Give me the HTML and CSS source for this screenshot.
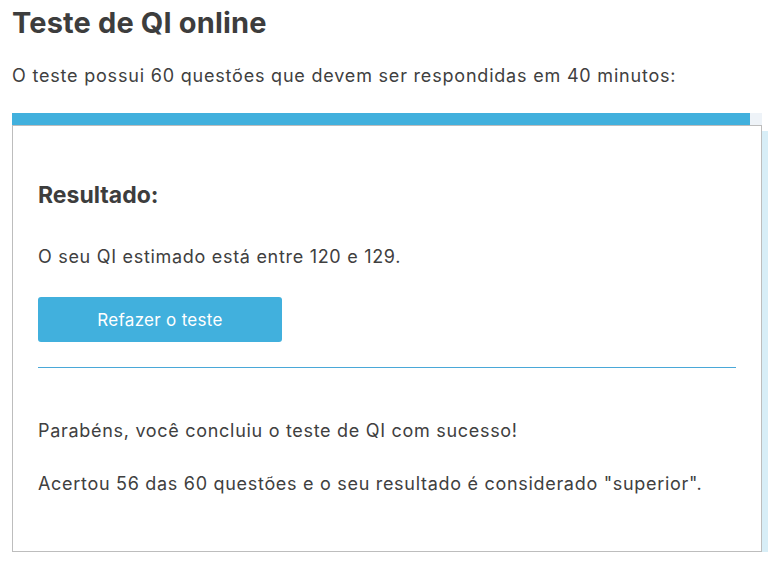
FILE: index.html
```html
<!DOCTYPE html>
<html lang="pt">
<head>
<meta charset="utf-8">
<link rel="stylesheet" href="styles.css">
</head>
<body>
<main class="page">
  <h1 class="title">Teste de QI online</h1>
  <p class="intro">O teste possui 60 questões que devem ser respondidas em 40 minutos:</p>
  <div class="progress"><div class="progress-fill"></div></div>
  <section class="card">
    <h2 class="card-title">Resultado:</h2>
    <p class="text">O seu QI estimado está entre 120 e 129.</p>
    <button class="btn" type="button">Refazer o teste</button>
    <hr class="divider">
    <p class="text">Parabéns, você concluiu o teste de QI com sucesso!</p>
    <p class="text">Acertou 56 das 60 questões e o seu resultado é considerado "superior".</p>
  </section>
</main>
</body>
</html>
```
FILE: styles.css
```css
* { box-sizing: border-box; }
html, body { margin: 0; padding: 0; background: #fff; }
body {
  font-family: "Inter", "Noto Sans", sans-serif;
  color: #404040;
}
.page {
  padding: 5px 20px 0 12px;
}
.title {
  margin: 0;
  font-size: 29px;
  line-height: 36px;
  font-weight: 700;
  color: #3d3d3d;
  letter-spacing: 0.15px;
}
.intro {
  margin: 23px 0 0;
  font-size: 18px;
  line-height: 24px;
  letter-spacing: 0.8px;
}
.progress {
  margin-top: 25px;
  height: 12px;
  width: 750px;
  background: #eef3f8;
}
.progress-fill {
  height: 100%;
  width: 738px;
  background: #41b0dd;
}
.card {
  width: 750px;
  border: 1px solid #bdbdbd;
  background: #fff;
  box-shadow: 6px 6px 0 #d8eef7;
  padding: 54px 25px 55px;
}
.card-title {
  margin: 0;
  font-size: 23px;
  line-height: 30px;
  font-weight: 700;
  color: #3d3d3d;
}
.text {
  margin: 0;
  font-size: 18px;
  line-height: 24px;
  letter-spacing: 0.7px;
}
.card-title + .text { margin-top: 35px; }
.btn {
  display: block;
  margin-top: 28px;
  width: 244px;
  height: 45px;
  border: 0;
  border-radius: 3px;
  background: #41b0dd;
  color: #fff;
  font-family: inherit;
  font-size: 17px;
  letter-spacing: 0.3px;
}
.divider {
  margin: 25px 0 0;
  border: 0;
  border-top: 1px solid #4aa8d8;
}
.divider + .text { margin-top: 51px; }
.text + .text { margin-top: 29px; }
```
